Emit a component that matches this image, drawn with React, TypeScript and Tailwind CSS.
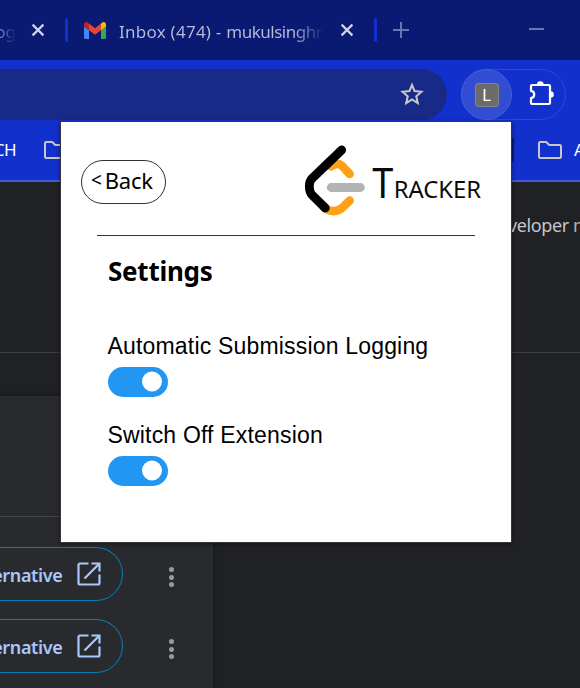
import type { ReactNode } from "react";

const UI = "font-['Noto_Sans','Open_Sans',sans-serif]";

function CloseIcon() {
  return (
    <svg width="14" height="14" viewBox="0 0 14 14" fill="none" stroke="#d0d4ea" strokeWidth="2.2">
      <path d="M1.6 1.6 12.4 12.4M12.4 1.6 1.6 12.4" />
    </svg>
  );
}

function GmailIcon() {
  return (
    <svg width="22" height="17" viewBox="0 0 22 17">
      <path d="M0 4.5 5 8.2V17H1.5A1.5 1.5 0 0 1 0 15.500z" fill="#4285f4" />
      <path d="M22 4.500 17 8.200V17h3.500a1.500 1.500 0 0 0 1.500-1.500z" fill="#34a853" />
      <path d="M17 1.500V8.200l5-3.700V2.500C22 .4 19.700-.7 18 .7z" fill="#fbbc04" />
      <path d="M5 8.200V1.500L11 6.200l6-4.700v6.700L11 12.700z" fill="#ea4335" />
      <path d="M0 2.500v2l5 3.700V1.500L4 .7C2.300-.7 0 .4 0 2.500z" fill="#c5221f" />
    </svg>
  );
}

function FolderIcon() {
  return (
    <svg width="24" height="18" viewBox="0 0 24 18" fill="none" stroke="#c7c7c7" strokeWidth="2" strokeLinejoin="round">
      <path d="M1 2.200Q1 1 2.200 1H8.300L11.200 4H21.800Q23 4 23 5.200V15.800Q23 17 21.800 17H2.200Q1 17 1 15.800z" />
    </svg>
  );
}

function StarIcon() {
  return (
    <svg width="26" height="25" viewBox="0.2 0.5 23.6 22.7" fill="none" stroke="#c7c7c7" strokeWidth="1.900">
      <path d="M12 3.200 14.300 8.800 20.500 9.400 15.900 13.500 17.200 19.600 12 16.300 6.800 19.600 8.100 13.500 3.500 9.400 9.700 8.800z" />
    </svg>
  );
}

function PuzzleIcon() {
  return (
    <svg width="25" height="25" viewBox="0 0 25 25">
      <path d="M2 5.200Q2 4 3.200 4H19.800Q21 4 21 5.200V21.800Q21 23 19.800 23H3.200Q2 23 2 21.800V17.200C6.300 16.400 6.300 10.600 2 9.800z" fill="none" stroke="#fff" strokeWidth="2.200" strokeLinejoin="round" />
      <path d="M8 3.500a3.300 3.300 0 0 1 6.600 0zM21.500 10.200a3.300 3.300 0 0 1 0 6.600z" fill="#fff" />
    </svg>
  );
}

function Logo() {
  return (
    <svg className="shrink-0" width="184" height="74" viewBox="0 0 184 74" fill="none" strokeLinecap="round">
      <path d="M31 21.500Q37 16.500 42 20.800L49.700 29" stroke="#ffa116" strokeWidth="8.500" />
      <path d="M24 62.500Q33 69.500 42 63L49.700 55.600" stroke="#ffa116" strokeWidth="8.500" />
      <path d="M31.200 42.500H60.400" stroke="#b3b3b3" strokeWidth="8.800" />
      <path d="M41.700 5 12 33.500C8.400 37 8.400 46.500 12.200 50.200L25.300 63" stroke="#000" strokeWidth="8.800" strokeLinejoin="round" />
      <g fill="#0b0b0b" fontFamily="Noto Sans, Open Sans, sans-serif">
        <text x="72.3" y="53" fontSize="41.500" textLength="21" lengthAdjust="spacingAndGlyphs">T</text>
        <text x="93.700" y="53" fontSize="24" textLength="87.500" lengthAdjust="spacingAndGlyphs">RACKER</text>
      </g>
    </svg>
  );
}

function Separator() {
  return <div className="h-6 w-[3px] shrink-0 rounded-sm bg-[#1230d2]" />;
}

function TabStrip() {
  return (
    <div className="flex h-[60px] items-center bg-[#0a1a73] text-[17px] text-[#b9bdd9]">
      <div className="flex h-6 w-4 items-center justify-end overflow-hidden bg-gradient-to-r from-[#7c84b4] to-[#0a1a73] bg-clip-text pt-1 text-transparent">og</div>
      <div className="ml-[15px]"><CloseIcon /></div>
      <div className="ml-5"><Separator /></div>
      <div className="ml-4"><GmailIcon /></div>
      <div className="ml-[13px] mt-[3px] w-[205px] overflow-hidden whitespace-nowrap bg-gradient-to-r from-[#b9bdd9] from-85% to-[#0a1a73] bg-clip-text text-transparent">
        <span className="tracking-[0.250px]">Inbox (474) - </span>
        <span className="tracking-[-0.500px]">mukulsinghr</span>
      </div>
      <div className="ml-4"><CloseIcon /></div>
      <div className="ml-5"><Separator /></div>
      <svg className="ml-4 shrink-0" width="16" height="16" viewBox="0 0 16 16" stroke="#6c76ad" strokeWidth="2">
        <path d="M8 0V16M0 8H16" />
      </svg>
      <div className="-mt-0.5 ml-[120px] h-0.5 w-[15px] bg-[#6c76ad]" />
    </div>
  );
}

function Toolbar() {
  return (
    <div className="flex h-[60px] items-start bg-[#1230cc] pt-[9px]">
      <div className="flex h-[51px] w-[447px] items-center justify-end rounded-r-full bg-[#172a88] pr-[22.500px]">
        <StarIcon />
      </div>
      <div className="ml-3.5 flex h-[51px] w-[105px] items-center rounded-full border border-[#2e49d4]">
        <div className="-ml-px flex size-[51px] items-center justify-center rounded-full border border-[#465dd8] bg-[#324dd1]">
          <div className="flex size-6 items-center justify-center rounded-[3px] border border-[#858585] bg-[#6b6b6b] text-[17px] leading-none text-white">L</div>
        </div>
        <div className="ml-[17px] mb-[3px]"><PuzzleIcon /></div>
      </div>
    </div>
  );
}

function Bookmarks() {
  return (
    <div className="flex h-[62px] items-center border-b-2 border-[#415ada] bg-[#1230cc] text-[17px] text-white">
      <div className="flex w-4 shrink-0 justify-end overflow-hidden tracking-[-0.5px]">CH</div>
      <div className="ml-7 shrink-0"><FolderIcon /></div>
      <div className="ml-[443px] h-6 w-[3px] shrink-0 rounded-sm bg-[#0a1a73]" />
      <div className="ml-6 shrink-0"><FolderIcon /></div>
      <div className="ml-3 w-1.5 shrink-0 overflow-hidden">A</div>
    </div>
  );
}

function AlternativeRow() {
  return (
    <div className="flex h-[72px] items-start">
      <div className="flex h-[54px] w-[123px] shrink-0 items-center justify-end rounded-r-full border border-l-0 border-[#087db5] pr-[21px]">
        <span className="mt-0.5 shrink-0 text-[18px] font-semibold tracking-[-0.350px] text-[#a8c7fa]">ernative</span>
        <svg className="ml-[14.500px] shrink-0" width="24" height="24" viewBox="0 0 24 24" fill="none" stroke="#a8c7fa" strokeWidth="2.200">
          <path d="M11.500 1.500H3Q1.500 1.500 1.500 3V21Q1.500 22.500 3 22.500H21Q22.500 22.500 22.500 21V12.500M14.500 1.500H22.500V9.500M22 2 7.500 16.500" />
        </svg>
      </div>
      <div className="ml-[45.500px] mt-5 flex flex-col gap-[2.500px]">
        <i className="size-[5px] rounded-full bg-[#9a9b9e]" />
        <i className="size-[5px] rounded-full bg-[#9a9b9e]" />
        <i className="size-[5px] rounded-full bg-[#9a9b9e]" />
      </div>
    </div>
  );
}

function PageContent() {
  return (
    <div className="flex h-[506px] flex-col bg-[#202124]">
      <div className="flex h-[171px] items-start justify-end overflow-hidden border-b border-[#3c3d3f] pt-[31px]">
        <div className="w-[72px] whitespace-nowrap text-[18px] leading-6 tracking-[-0.400px] text-[#c4c6c8]">
          veloper <span className="text-[#b0b2b4]">m</span>
        </div>
      </div>
      <div className="mt-[43px] h-[292px] w-[213px] bg-[#292a2d] shadow-[0_0_5px_rgba(0,0,0,0.4)]">
        <div className="h-[121px] border-b border-[#414245]" />
        <div className="pt-[30px]">
          <AlternativeRow />
          <AlternativeRow />
        </div>
      </div>
    </div>
  );
}

function Setting({ children }: { children: ReactNode }) {
  return (
    <label className="flex h-[89px] flex-col items-start">
      <span className="-ml-[0.500px] h-[35px] whitespace-nowrap font-['Liberation_Sans',Arial,sans-serif] text-[23px] leading-7 tracking-[0.180px]">{children}</span>
      <span className="flex h-[30px] w-[60px] items-center justify-end rounded-full bg-[#2196f3] pr-[6.500px]">
        <span className="size-[19.500px] -translate-y-[0.500px] rounded-full bg-white" />
      </span>
    </label>
  );
}

function Popup() {
  return (
    <div className="absolute left-[60px] top-[121px] h-[422px] w-[452px] border border-[#35363f] bg-white text-black shadow-[0_1px_4px_rgba(0,0,0,0.45)]">
      <div className="flex h-[113px] items-start justify-between pl-5 pr-[27px] pt-[23px]">
        <button className="mt-[15px] flex h-11 w-[85px] items-center justify-center rounded-full border border-[#333] pb-[3px] pr-[3px] text-[22px] tracking-[-0.200px]">
          <span className="mr-[3px] text-[19px]">&lt;</span>Back
        </button>
        <Logo />
      </div>
      <div className="mx-9 h-px bg-[#333]" />
      <h1 className="ml-[47px] mt-[17px] h-[79px] text-[26px] font-bold leading-9 tracking-[-0.250px]">Settings</h1>
      <div className="ml-[47px]">
        <Setting>Automatic Submission Logging</Setting>
        <Setting>Switch Off Extension</Setting>
      </div>
    </div>
  );
}

export default function App() {
  return (
    <main className={`relative h-[688px] w-[580px] overflow-hidden ${UI}`}>
      <TabStrip />
      <Toolbar />
      <Bookmarks />
      <PageContent />
      <Popup />
    </main>
  );
}
